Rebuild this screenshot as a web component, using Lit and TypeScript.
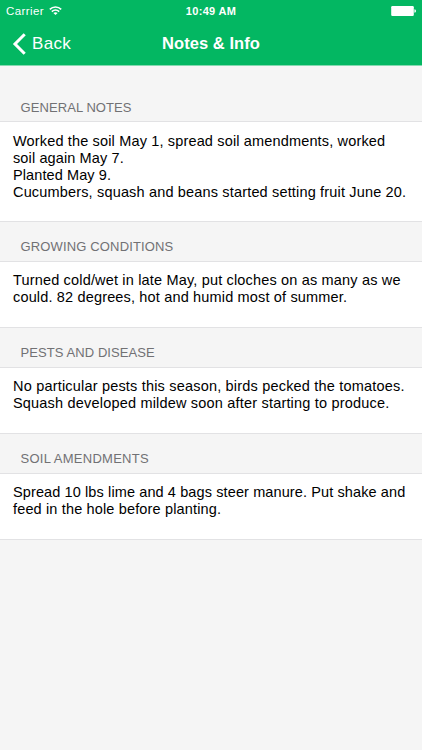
import { LitElement, html, css } from "lit";
import { customElement } from "lit/decorators.js";
import { styleMap } from "lit/directives/style-map.js";

interface Line {
  text: string;
  tracking: number;
}

interface Section {
  title: string;
  titleTracking: number;
  lines: Line[];
}

const sections: Section[] = [
  {
    title: "GENERAL NOTES",
    titleTracking: 0.08,
    lines: [
      { text: "Worked the soil May 1, spread soil amendments, worked", tracking: 0.155 },
      { text: "soil again May 7.", tracking: 0.12 },
      { text: "Planted May 9.", tracking: 0.1 },
      { text: "Cucumbers, squash and beans started setting fruit June 20.", tracking: 0.165 },
    ],
  },
  {
    title: "GROWING CONDITIONS",
    titleTracking: 0.15,
    lines: [
      { text: "Turned cold/wet in late May, put cloches on as many as we", tracking: 0.17 },
      { text: "could. 82 degrees, hot and humid most of summer.", tracking: 0.16 },
    ],
  },
  {
    title: "PESTS AND DISEASE",
    titleTracking: 0.08,
    lines: [
      { text: "No particular pests this season, birds pecked the tomatoes.", tracking: 0.19 },
      { text: "Squash developed mildew soon after starting to produce.", tracking: 0.19 },
    ],
  },
  {
    title: "SOIL AMENDMENTS",
    titleTracking: 0.26,
    lines: [
      { text: "Spread 10 lbs lime and 4 bags steer manure. Put shake and", tracking: 0.11 },
      { text: "feed in the hole before planting.", tracking: 0.15 },
    ],
  },
];

const spacing = (tracking: number) => styleMap({ letterSpacing: `${tracking}px` });

@customElement("app-root")
export class AppRoot extends LitElement {
  static styles = css`
    :host {
      display: block;
      box-sizing: border-box;
      height: 750px;
      overflow: hidden;
      background: #f5f5f5;
      color: #000;
      font-family: "Liberation Sans", Arial, sans-serif;
    }
    .top {
      box-sizing: border-box;
      height: 66px;
      background: #03b762;
      border-bottom: 1px solid #84d9b0;
      color: #fff;
    }
    .status,
    .nav {
      display: grid;
      grid-template-columns: 1fr auto 1fr;
      align-items: center;
    }
    .status {
      height: 22px;
      padding: 0 6px;
      font-size: 11.5px;
    }
    .carrier {
      display: flex;
      align-items: center;
      gap: 5px;
      letter-spacing: 0.4px;
    }
    .time {
      font-weight: bold;
      font-size: 11px;
      letter-spacing: 0.3px;
    }
    .battery {
      justify-self: end;
    }
    svg {
      display: block;
    }
    .nav {
      height: 43px;
      padding: 0 12px;
    }
    .back {
      display: flex;
      align-items: center;
      gap: 6px;
      font-size: 17px;
      letter-spacing: 0.35px;
    }
    .title {
      font-size: 16.5px;
      font-weight: bold;
      letter-spacing: 0.06px;
    }
    .heading {
      box-sizing: border-box;
      height: 39px;
      padding: 17px 0 0 20.5px;
      font-size: 13px;
      line-height: 16px;
      color: #717174;
    }
    .cell {
      background: #fff;
      border: solid #e2e2e4;
      border-width: 1px 0;
      padding: 10px 0 0 13px;
      font-size: 14.5px;
      line-height: 17px;
      white-space: nowrap;
      box-sizing: border-box;
      height: 67px;
    }
    .section:first-child .heading {
      height: 55px;
      padding-top: 34px;
    }
    .section:first-child .cell {
      height: 101px;
      padding-top: 11px;
    }
  `;

  render() {
    return html`
      <header class="top">
        <div class="status">
          <div class="carrier">
            <span>Carrier</span>
            <svg width="13" height="10" viewBox="0 0 13 10" fill="none" stroke="#fff" stroke-width="1.6">
              <path d="M0.8 3.4C4 0.1 9 0.1 12.2 3.4" />
              <path d="M2.8 5.7C5 3.7 8 3.7 10.2 5.7" />
              <path d="M4.4 7Q6.5 5.3 8.6 7L6.5 9.1Z" fill="#fff" stroke="none" />
            </svg>
          </div>
          <div class="time">10:49 AM</div>
          <svg class="battery" width="25" height="10" viewBox="0 0 25 10" fill="#fff">
            <rect x="0.2" width="22.6" height="10" rx="1.2" />
            <path d="M23.4 3.2Q25 3.5 25 5Q25 6.5 23.4 6.8Z" />
          </svg>
        </div>
        <div class="nav">
          <div class="back">
            <svg width="14" height="22" viewBox="0 0 14 22" fill="none" stroke="#fff" stroke-width="3">
              <path d="M12.7 1.3L3 11L12.7 20.7" />
            </svg>
            <span>Back</span>
          </div>
          <div class="title">Notes &amp; Info</div>
        </div>
      </header>
      <main>
        ${sections.map(
          (s) => html`<section class="section">
            <div class="heading" style=${spacing(s.titleTracking)}>${s.title}</div>
            <div class="cell">
              ${s.lines.map((l) => html`<div style=${spacing(l.tracking)}>${l.text}</div>`)}
            </div>
          </section>`
        )}
      </main>
    `;
  }
}
